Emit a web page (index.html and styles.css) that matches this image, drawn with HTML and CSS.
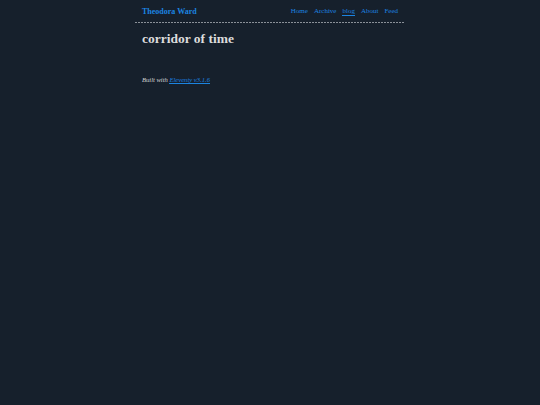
FILE: index.html
```html
<!DOCTYPE html>
<html lang="en">
<head>
<meta charset="utf-8">
<title>corridor of time</title>
<link rel="stylesheet" href="styles.css">
</head>
<body>
<div class="page">
  <header class="site-header">
    <a class="home-link" href="#">Theodora Ward</a>
    <nav class="nav">
      <a href="#">Home</a>
      <a href="#">Archive</a>
      <a href="#" class="current">blog</a>
      <a href="#">About</a>
      <a href="#">Feed</a>
    </nav>
  </header>
  <main class="content">
    <h1 class="title">corridor of time</h1>
  </main>
  <footer class="site-footer">
    <em>Built with <a href="#">Eleventy v3.1.6</a></em>
  </footer>
</div>
</body>
</html>
```

FILE: styles.css
```css
html, body {
  margin: 0;
  padding: 0;
  background: #16202c;
  color: #d6d6d6;
  font-family: "Liberation Serif", "Times New Roman", serif;
  font-size: 7.2px;
}
.page {
  width: 270px;
  margin: 0 auto;
}
a {
  color: #1c84e0;
}
.site-header {
  display: flex;
  justify-content: space-between;
  align-items: center;
  height: 22px;
  padding: 0 7px;
  position: relative;
}
.site-header::after {
  content: "";
  position: absolute;
  left: 0;
  right: 0;
  bottom: -1px;
  height: 1px;
  background: repeating-linear-gradient(to right, #8a9098 0 2px, transparent 2px 3px);
}
.home-link {
  font-size: 8px;
  font-weight: 700;
  text-decoration: none;
}
.nav {
  display: flex;
  gap: 6px;
  font-size: 7px;
  padding-top: 1px;
  line-height: 8px;
}
.nav a {
  text-decoration: none;
}
.nav a.current {
  border-bottom: 1px solid #1c84e0;
}
.content {
  padding: 0 7px;
}
.title {
  font-size: 13.5px;
  font-weight: 700;
  color: #dcdcdc;
  margin: 8px 0 0;
  line-height: 18px;
}
.site-footer {
  padding: 0 7px;
  margin-top: 28px;
  font-size: 6.6px;
  line-height: 8px;
}
.site-footer a {
  text-decoration: none;
  border-bottom: 1px solid #1c84e0;
}
```
